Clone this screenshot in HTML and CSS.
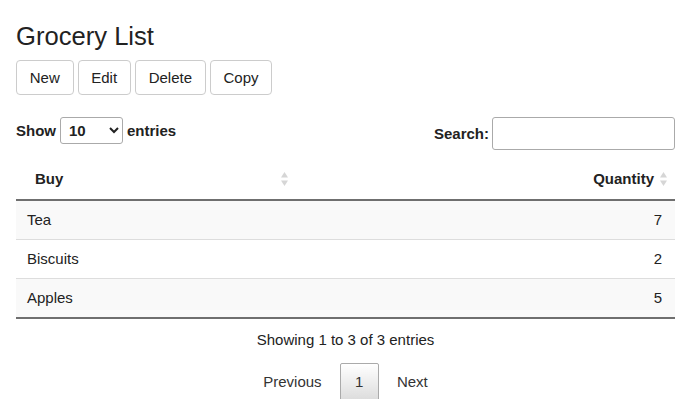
FILE: index.html
```html
<!DOCTYPE html>
<html lang="en">

<head>
    <meta charset="UTF-8">
    <meta name="viewport" content="width=device-width, initial-scale=1.0">
    <title>Grocery List</title>
    <link rel="stylesheet" href="styles.css">
</head>

<body>
    <div class="page">
        <h1>Grocery List</h1>
        <div class="toolbar">
            <button>New</button>
            <button>Edit</button>
            <button>Delete</button>
            <button>Copy</button>
        </div>

        <div class="controls">
            <label class="length">Show
                <select>
                    <option>10</option>
                    <option>25</option>
                    <option>50</option>
                    <option>100</option>
                </select>
                entries</label>
            <label class="search">Search: <input type="search"></label>
        </div>

        <table class="grid">
            <thead>
                <tr>
                    <th class="col-buy">
                        <div class="th-inner">
                            <span>Buy</span>
                            <svg class="sort" width="7" height="14" viewBox="0 0 7 14">
                                <path d="M3.5 0 L7 5.5 L0 5.5 Z" />
                                <path d="M0 8.5 L7 8.5 L3.5 14 Z" />
                            </svg>
                        </div>
                    </th>
                    <th class="col-qty">
                        <div class="th-inner">
                            <span>Quantity</span>
                            <svg class="sort" width="7" height="14" viewBox="0 0 7 14">
                                <path d="M3.5 0 L7 5.5 L0 5.5 Z" />
                                <path d="M0 8.5 L7 8.5 L3.5 14 Z" />
                            </svg>
                        </div>
                    </th>
                </tr>
            </thead>
            <tbody>
                <tr>
                    <td>Tea</td>
                    <td class="num">7</td>
                </tr>
                <tr>
                    <td>Biscuits</td>
                    <td class="num">2</td>
                </tr>
                <tr>
                    <td>Apples</td>
                    <td class="num">5</td>
                </tr>
            </tbody>
        </table>

        <div class="info">Showing 1 to 3 of 3 entries</div>
        <div class="paging">
            <a class="page-btn">Previous</a>
            <a class="page-btn current">1</a>
            <a class="page-btn">Next</a>
        </div>
    </div>
</body>

</html>
```

FILE: styles.css
```css
body {
    margin: 0;
    font-family: "Liberation Sans", Arial, sans-serif;
    color: #222;
    background: #fff;
}

.page {
    padding: 0 15px 0 16px;
}

h1 {
    font-size: 25.6px;
    font-weight: normal;
    line-height: 30px;
    margin: 21px 0 9px;
}

.toolbar {
    display: flex;
    gap: 4px;
}

.toolbar button {
    font-family: inherit;
    font-size: 15px;
    color: #222;
    line-height: 33px;
    padding: 0 12.75px;
    background: #fff;
    border: 1px solid #ccc;
    border-radius: 4px;
}

.controls {
    display: flex;
    justify-content: space-between;
    align-items: flex-start;
    margin-top: 22px;
    font-size: 15px;
    font-weight: bold;
}

.length {
    display: flex;
    align-items: center;
    gap: 4px;
    height: 27px;
}

.length select {
    font-family: inherit;
    font-size: 15px;
    font-weight: bold;
    color: #222;
    width: 63px;
    height: 27px;
    padding: 0 4px;
    border: 1px solid #aaa;
    border-radius: 3px;
    background: #fff;
}

.search {
    display: flex;
    align-items: center;
    gap: 3px;
}

.search input {
    width: 183px;
    height: 33px;
    box-sizing: border-box;
    border: 1px solid #aaa;
    border-radius: 3px;
    padding: 0 6px;
    font-size: 15px;
}

.grid {
    width: 100%;
    border-collapse: collapse;
    margin-top: 9px;
    font-size: 15px;
}

.grid th {
    font-weight: bold;
    padding: 11px 0;
    line-height: 18px;
    border-bottom: 2px solid #6f6f6f;
}

.col-buy {
    width: 282px;
    text-align: left;
}

.col-buy .th-inner {
    display: flex;
    justify-content: space-between;
    align-items: center;
    padding: 0 10px 0 19px;
}

.col-qty .th-inner {
    display: flex;
    justify-content: flex-end;
    align-items: center;
    gap: 6px;
    padding-right: 8px;
}

.sort path {
    fill: #d6d6d6;
}

.grid td {
    padding: 10px 13px 10px 11px;
    line-height: 18px;
    border-top: 1px solid #ddd;
}

.grid tbody tr:nth-child(odd) {
    background: #f9f9f9;
}

.grid tbody tr:last-child td {
    border-bottom: 2px solid #6f6f6f;
}

.grid .num {
    text-align: right;
}

.info {
    text-align: center;
    font-size: 15px;
    line-height: 20px;
    margin-top: 11px;
}

.paging {
    display: flex;
    justify-content: center;
    gap: 2px;
    margin-top: 13px;
    font-size: 15px;
}

.page-btn {
    color: #333;
    padding: 9px 15px;
    line-height: 18px;
    border: 1px solid transparent;
    border-radius: 2px;
}

.page-btn.current {
    padding: 9px 14.5px;
    border-color: #aaa;
    background: linear-gradient(to bottom, #fff 0%, #dcdcdc 100%);
}
```
